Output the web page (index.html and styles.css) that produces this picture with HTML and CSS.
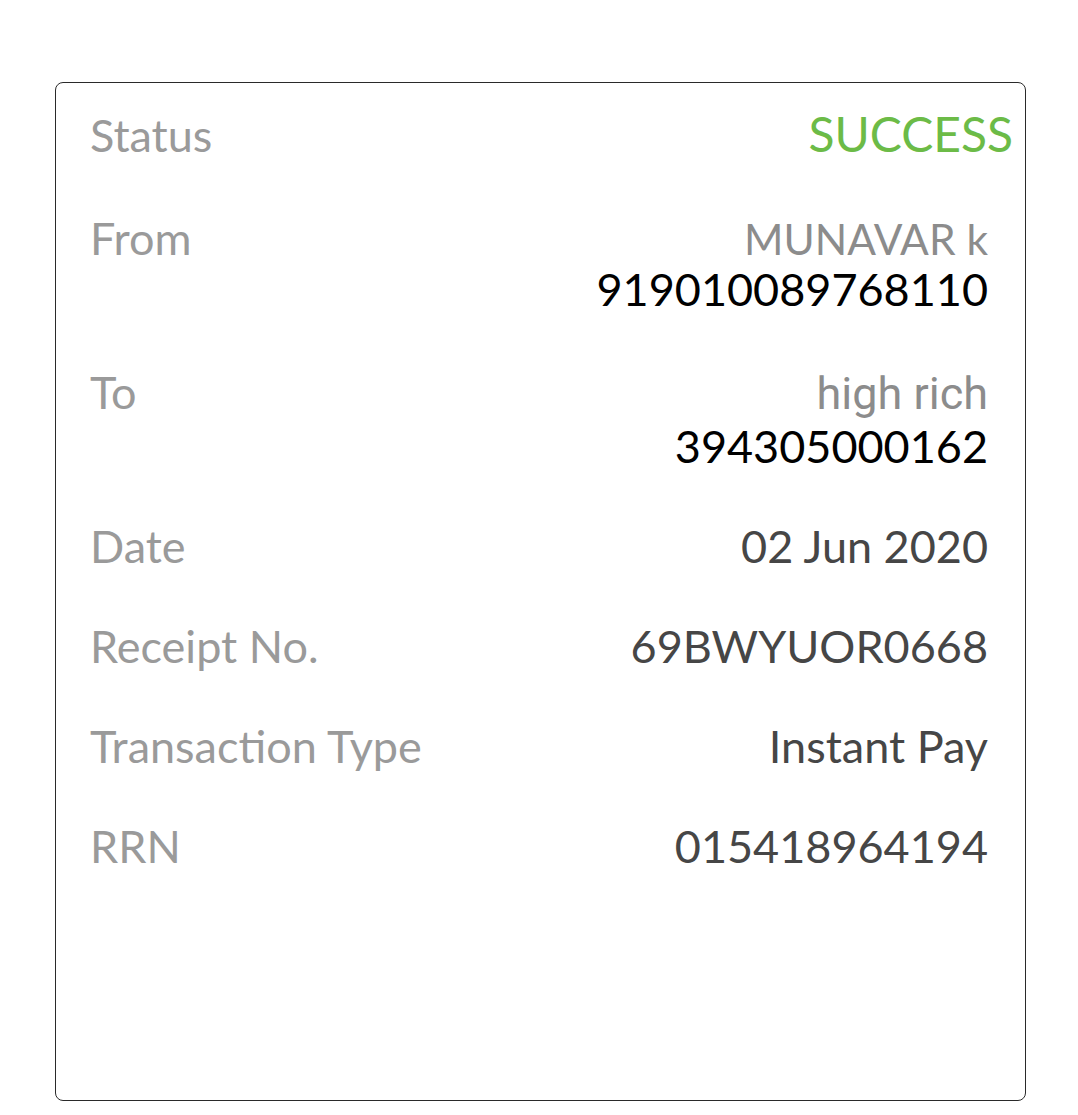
FILE: index.html
```html
<!DOCTYPE html>
<html>
<head>
<meta charset="utf-8">
<link rel="stylesheet" href="styles.css">
</head>
<body>
<div class="card">
  <div class="row status-row">
    <div class="label">Status</div>
    <div class="success">SUCCESS</div>
  </div>
  <div class="row from-row">
    <div class="label">From</div>
    <div class="value">
      <div class="name small">MUNAVAR k</div>
      <div class="acct">919010089768110</div>
    </div>
  </div>
  <div class="row">
    <div class="label">To</div>
    <div class="value">
      <div class="name roboto">high rich</div>
      <div class="acct">394305000162</div>
    </div>
  </div>
  <div class="row">
    <div class="label">Date</div>
    <div class="value">02 Jun 2020</div>
  </div>
  <div class="row">
    <div class="label">Receipt No.</div>
    <div class="value">69BWYUOR0668</div>
  </div>
  <div class="row">
    <div class="label">Transaction Type</div>
    <div class="value">Instant Pay</div>
  </div>
  <div class="row">
    <div class="label">RRN</div>
    <div class="value">015418964194</div>
  </div>
</div>
</body>
</html>
```

FILE: styles.css
```css
html, body {
  margin: 0;
  padding: 0;
  background: #ffffff;
}
body {
  font-family: Lato, "Open Sans", sans-serif;
}
.card {
  box-sizing: border-box;
  margin: 82px 0 0 55px;
  width: 971px;
  height: 1019px;
  border: 1px solid #2a2a2a;
  border-radius: 8px;
  padding: 25px 37px 0 34px;
  display: flex;
  flex-direction: column;
  gap: 49px;
}
.row {
  display: flex;
  justify-content: space-between;
  align-items: flex-start;
  font-size: 45px;
  line-height: 51px;
}
.label {
  color: #9a9a9a;
}
.value {
  color: #464646;
  text-align: right;
}
.status-row {
  margin-right: -25px;
  margin-bottom: 3px;
  align-items: baseline;
}
.from-row {
  margin-bottom: 3px;
}
.success {
  color: #6cbb47;
  font-size: 48px;
}
.name {
  color: #8c8c8c;
}
.small {
  font-size: 42.5px;
}
.roboto {
  font-family: Roboto, sans-serif;
  line-height: 54px;
}
.acct {
  color: #000000;
}
```
